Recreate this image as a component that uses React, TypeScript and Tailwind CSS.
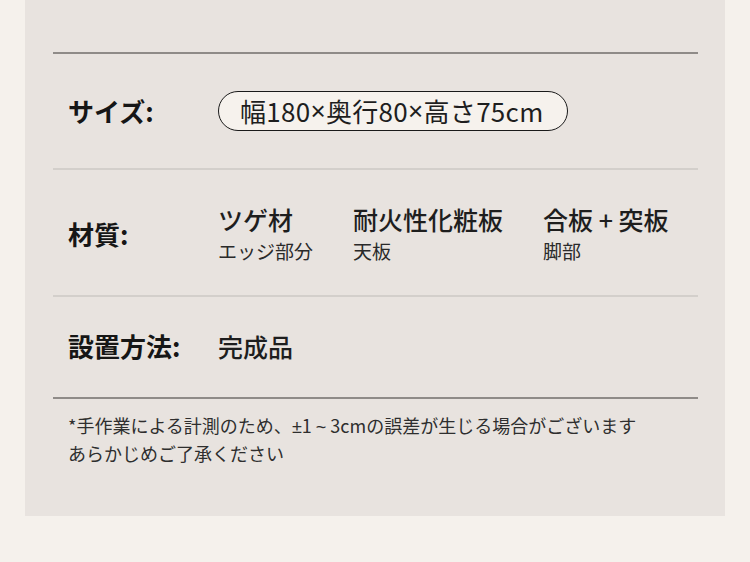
const font = { fontFamily: '"Noto Sans CJK JP", "Noto Sans", sans-serif' }
const latin = { fontFamily: '"Liberation Sans", sans-serif' }

const materials = [
  { name: 'ツゲ材', part: 'エッジ部分', width: 'w-[135px]' },
  { name: '耐火性化粧板', part: '天板', width: 'w-[190px]' },
  { name: '合板 + 突板', part: '脚部', width: 'w-[150px]' },
]

export default function App() {
  return (
    <div className="min-h-[562px] w-[750px] bg-[#f5f1ec]" style={font}>
      <div className="mx-[25px] h-[516px] bg-[#e8e3df] px-[28px] pr-[27px] pt-[52px]">
        {/* size */}
        <div className="flex h-[118px] items-center border-t-2 border-b-2 border-t-[#8f8b88] border-b-[#d3cfcb] pl-[15px]">
          <div className="w-[150px] text-[26px] font-bold leading-none text-[#161616]">サイズ:</div>
          <div className="flex h-[40px] items-center rounded-full border-[1.5px] border-[#1a1a1a] bg-[#f6f2ed] pl-[21px] pr-[23px] text-[26px] leading-none tracking-[0.3px] text-[#1e1e1e]">
            幅180<span style={latin}>×</span>奥行80<span style={latin}>×</span>高さ75cm
          </div>
        </div>

        {/* material */}
        <div className="flex h-[127px] items-center border-b-2 border-[#d3cfcb] pl-[15px]">
          <div className="w-[150px] pt-[3px] text-[26px] font-bold leading-none text-[#161616]">材質:</div>
          <div className="flex pt-[1px]">
            {materials.map((m) => (
              <div key={m.name} className={m.width}>
                <div className="text-[25px] font-medium leading-[30px] text-[#1e1e1e]">{m.name}</div>
                <div className="mt-[5px] text-[19px] leading-[24px] text-[#2a2a2a]">{m.part}</div>
              </div>
            ))}
          </div>
        </div>

        {/* install */}
        <div className="flex h-[102px] items-center border-b-2 border-[#8f8b88] pl-[15px] pb-[2px]">
          <div className="w-[150px] text-[26px] font-bold leading-none text-[#161616]">設置方法:</div>
          <div className="text-[25px] font-medium leading-none text-[#1e1e1e]">完成品</div>
        </div>

        <p className="pl-[15px] pt-[13px] text-[18px] leading-[26px] text-[#2e2e2e]">
          *手作業による計測のため、<span style={latin}>±</span>1 <span style={latin}>~</span> 3cmの誤差が生じる場合がございます
          <br />
          あらかじめご了承ください
        </p>
      </div>
    </div>
  )
}
